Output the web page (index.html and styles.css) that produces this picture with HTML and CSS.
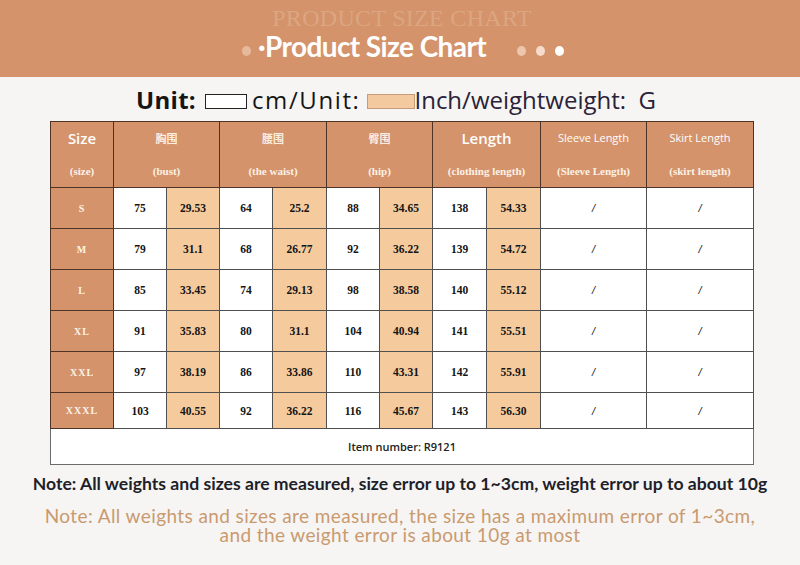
FILE: index.html
```html
<!DOCTYPE html>
<html>
<head>
<meta charset="utf-8">
<link rel="stylesheet" href="styles.css">
</head>
<body>
<header class="banner">
  <div class="ghost">PRODUCT SIZE CHART</div>
  <div class="title-row">
    <span class="dot d1"></span>
    <h1 class="title">·Product Size Chart</h1>
    <span class="dots"><span class="dot d2"></span><span class="dot d3"></span><span class="dot d4"></span></span>
  </div>
</header>
<div class="unit">
  <span class="u-b">Unit:</span>
  <span class="box white"></span>
  <span class="u-cm">cm/Unit:</span>
  <span class="box peach"></span>
  <span class="u-in">Inch/weightweight:&nbsp; G</span>
</div>
<table class="chart">
  <colgroup>
    <col class="c-size"><col class="c53"><col class="c53"><col class="c53"><col class="c54"><col class="c53"><col class="c53"><col class="c54"><col class="c54"><col class="c106"><col class="c107">
  </colgroup>
  <thead>
    <tr>
      <th><div class="h"><span class="h1 sans">Size</span><span class="h2">(size)</span></div></th>
      <th colspan="2"><div class="h"><span class="h1 cn">胸围</span><span class="h2">(bust)</span></div></th>
      <th colspan="2"><div class="h"><span class="h1 cn">腰围</span><span class="h2">(the waist)</span></div></th>
      <th colspan="2"><div class="h"><span class="h1 cn">臀围</span><span class="h2">(hip)</span></div></th>
      <th colspan="2"><div class="h"><span class="h1 sans">Length</span><span class="h2">(clothing length)</span></div></th>
      <th><div class="h"><span class="h1 sans small">Sleeve Length</span><span class="h2">(Sleeve Length)</span></div></th>
      <th><div class="h"><span class="h1 sans small">Skirt Length</span><span class="h2">(skirt length)</span></div></th>
    </tr>
  </thead>
  <tbody>
    <tr><td class="sz">S</td><td>75</td><td class="in">29.53</td><td>64</td><td class="in">25.2</td><td>88</td><td class="in">34.65</td><td>138</td><td class="in">54.33</td><td class="sl">/</td><td class="sl">/</td></tr>
    <tr><td class="sz">M</td><td>79</td><td class="in">31.1</td><td>68</td><td class="in">26.77</td><td>92</td><td class="in">36.22</td><td>139</td><td class="in">54.72</td><td class="sl">/</td><td class="sl">/</td></tr>
    <tr><td class="sz">L</td><td>85</td><td class="in">33.45</td><td>74</td><td class="in">29.13</td><td>98</td><td class="in">38.58</td><td>140</td><td class="in">55.12</td><td class="sl">/</td><td class="sl">/</td></tr>
    <tr><td class="sz">XL</td><td>91</td><td class="in">35.83</td><td>80</td><td class="in">31.1</td><td>104</td><td class="in">40.94</td><td>141</td><td class="in">55.51</td><td class="sl">/</td><td class="sl">/</td></tr>
    <tr><td class="sz">XXL</td><td>97</td><td class="in">38.19</td><td>86</td><td class="in">33.86</td><td>110</td><td class="in">43.31</td><td>142</td><td class="in">55.91</td><td class="sl">/</td><td class="sl">/</td></tr>
    <tr class="last"><td class="sz">XXXL</td><td>103</td><td class="in">40.55</td><td>92</td><td class="in">36.22</td><td>116</td><td class="in">45.67</td><td>143</td><td class="in">56.30</td><td class="sl">/</td><td class="sl">/</td></tr>
    <tr class="item"><td colspan="11">Item number: R9121</td></tr>
  </tbody>
</table>
<p class="note-b">Note: All weights and sizes are measured, size error up to 1~3cm, weight error up to about 10g</p>
<p class="note-o">Note: All weights and sizes are measured, the size has a maximum error of 1~3cm,<br>and the weight error is about 10g at most</p>
</body>
</html>
```
FILE: styles.css
```css
html, body { margin: 0; padding: 0; }
body {
  width: 800px;
  height: 565px;
  overflow: hidden;
  background: #f6f5f3;
  font-family: "Open Sans", "Noto Sans", sans-serif;
}
.banner {
  height: 77px;
  background: #d4936a;
  display: flex;
  flex-direction: column;
  align-items: center;
}
.ghost {
  margin-top: 4px;
  font-family: "Liberation Serif", serif;
  font-size: 24px;
  line-height: 28px;
  color: #dba681;
  letter-spacing: 0.3px;
  margin-left: 4px;
}
.title-row {
  display: flex;
  align-items: center;
  margin-top: -2px;
  margin-left: 6px;
}
.title {
  margin: 0 0 0 7px;
  font-family: "Lato", sans-serif;
  font-weight: 700;
  font-size: 28px;
  line-height: 32px;
  color: #fff;
  letter-spacing: -0.6px;
}
.dot {
  display: inline-block;
  width: 9px;
  height: 10px;
  border-radius: 50%;
  margin-top: 10px;
}
.d1 { background: #e7b99b; }
.dots { display: flex; gap: 10px; margin-left: 31px; }
.d2 { background: #ecc6ad; }
.d3 { background: #f5dccc; }
.d4 { background: #ffffff; }
.unit {
  display: flex;
  align-items: center;
  height: 44px;
  padding-left: 136px;
  font-family: "Open Sans", sans-serif;
  font-size: 24px;
  color: #151515;
}
.u-b { font-weight: 700; letter-spacing: 0.3px; }
.box {
  display: inline-block;
  height: 13px;
  border: 1px solid #222;
  margin-top: 4px;
}
.box.white { width: 40px; background: #fff; margin-left: 9px; }
.box.peach { width: 46px; background: #f3c9a0; border-color: #c79b78; margin-left: 7px; }
.u-cm { margin-left: 5px; letter-spacing: 1.6px; }
.u-in { color: #2a2238; letter-spacing: 0; margin-left: -1px; }
.chart {
  margin-left: 50px;
  border-collapse: collapse;
  table-layout: fixed;
  width: 703px;
  border: 1px solid #6b6b6b;
}
.c-size { width: 63px; }
.c53 { width: 53px; }
.c54 { width: 54px; }
.c106 { width: 106px; }
.c107 { width: 107px; }
.chart th {
  background: #d4936a;
  border: 1px solid #4e3426;
  height: 65px;
  padding: 0;
  vertical-align: top;
  color: #fff;
  font-weight: normal;
}
.h {
  display: flex;
  flex-direction: column;
  align-items: center;
  height: 65px;
}
.h1 { margin-top: 6px; height: 20px; line-height: 20px; }
.h1.sans { font-family: "Open Sans", sans-serif; font-size: 15px; font-weight: 600; }
.h1.small { font-size: 11px; font-weight: 400; }
.h1.cn { font-family: "Noto Sans CJK SC", serif; font-size: 11px; font-weight: 700; color: #fbeee2; }
.h2 {
  margin-top: 16px;
  font-family: "Liberation Serif", serif;
  font-weight: 700;
  font-size: 11px;
  line-height: 14px;
  color: #fdf1e6;
}
.chart td {
  height: 40px;
  padding: 0;
  border: 1px solid #4f4f4f;
  background: #fff;
  text-align: center;
  font-family: "Liberation Serif", serif;
  font-weight: 700;
  font-size: 11.5px;
  color: #141414;
}
.chart td.in { background: #f5cb9e; }
.chart td.sz {
  background: #d4936a;
  color: #fdf3e9;
  font-size: 10px;
  letter-spacing: 1px;
  border-color: #4e3426;
}
.chart td.sl { font-family: "Liberation Sans", sans-serif; font-style: italic; font-weight: 400; font-size: 11px; }
.chart tr.last td { height: 35px; }
.chart tr.item td {
  height: 35px;
  font-family: "Open Sans", sans-serif;
  font-weight: 600;
  font-size: 11px;
  color: #222;
  border-color: #6b6b6b;
}
.note-b {
  margin: 8px 0 0;
  text-align: center;
  font-family: "Lato", sans-serif;
  font-weight: 700;
  font-size: 17.6px;
  line-height: 22px;
  color: #1f1f2a;
  letter-spacing: 0;
  white-space: nowrap;
}
.note-o {
  margin: 11px 0 0;
  text-align: center;
  font-family: "Lato", sans-serif;
  font-weight: 400;
  font-size: 19px;
  line-height: 19px;
  color: #c99a70;
  letter-spacing: 0.4px;
  white-space: nowrap;
}
```
